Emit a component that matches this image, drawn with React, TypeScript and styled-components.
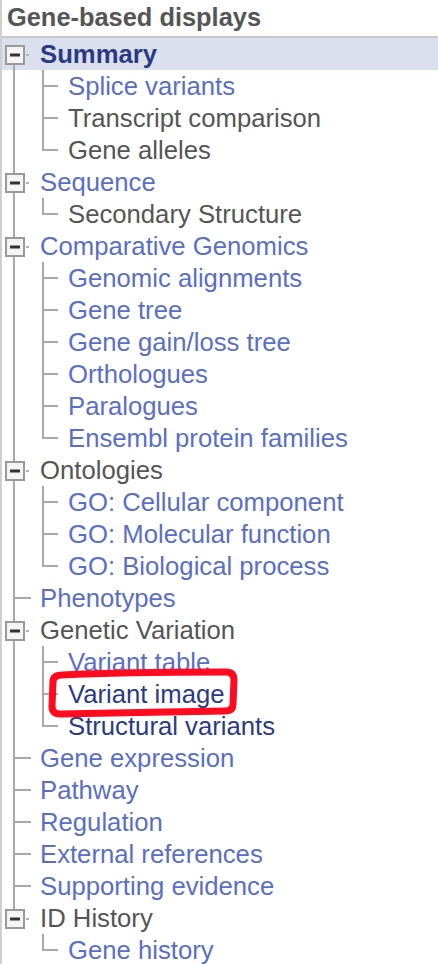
import React from "react";
import styled, { createGlobalStyle } from "styled-components";

const Global = createGlobalStyle`
  html, body { margin: 0; padding: 0; background: #fff; }
  body { font-family: "Liberation Sans", Arial, Helvetica, sans-serif; }
`;

type Tone = "link" | "text" | "current" | "active";

interface Node {
  label: string;
  tone: Tone;
  children?: { label: string; tone: Tone }[];
}

const tree: Node[] = [
  {
    label: "Summary",
    tone: "active",
    children: [
      { label: "Splice variants", tone: "link" },
      { label: "Transcript comparison", tone: "text" },
      { label: "Gene alleles", tone: "text" },
    ],
  },
  { label: "Sequence", tone: "link", children: [{ label: "Secondary Structure", tone: "text" }] },
  {
    label: "Comparative Genomics",
    tone: "link",
    children: [
      { label: "Genomic alignments", tone: "link" },
      { label: "Gene tree", tone: "link" },
      { label: "Gene gain/loss tree", tone: "link" },
      { label: "Orthologues", tone: "link" },
      { label: "Paralogues", tone: "link" },
      { label: "Ensembl protein families", tone: "link" },
    ],
  },
  {
    label: "Ontologies",
    tone: "text",
    children: [
      { label: "GO: Cellular component", tone: "link" },
      { label: "GO: Molecular function", tone: "link" },
      { label: "GO: Biological process", tone: "link" },
    ],
  },
  { label: "Phenotypes", tone: "link" },
  {
    label: "Genetic Variation",
    tone: "text",
    children: [
      { label: "Variant table", tone: "link" },
      { label: "Variant image", tone: "current" },
      { label: "Structural variants", tone: "current" },
    ],
  },
  { label: "Gene expression", tone: "link" },
  { label: "Pathway", tone: "link" },
  { label: "Regulation", tone: "link" },
  { label: "External references", tone: "link" },
  { label: "Supporting evidence", tone: "link" },
  { label: "ID History", tone: "text", children: [{ label: "Gene history", tone: "link" }] },
];

const colors: Record<Tone, string> = {
  link: "#5b6ec7",
  text: "#555555",
  current: "#2c3a86",
  active: "#2c3a86",
};

const LINE = "#a9a9a9";

const Panel = styled.div`
  position: relative;
  width: 438px;
  height: 964px;
  overflow: hidden;
  border-left: 2px solid #cfcfcf;
  box-sizing: border-box;
`;

const Header = styled.div`
  height: 36px;
  border-bottom: 2px solid #c8c8c8;
  padding-left: 5px;
  font-size: 25.4px;
  font-weight: bold;
  color: #555;
  line-height: 34px;
`;

const List = styled.ul`
  list-style: none;
  margin: 0;
  padding: 0;
  display: flex;
  flex-direction: column;
`;

const Row = styled.li<{ $active?: boolean }>`
  height: 32px;
  display: flex;
  align-items: center;
  background: ${(p) => (p.$active ? "#dbe0ef" : "transparent")};
  white-space: nowrap;
`;

const Gutter = styled.svg`
  flex: none;
  display: block;
`;

const Label = styled.span<{ $tone: Tone }>`
  color: ${(p) => colors[p.$tone]};
  font-weight: ${(p) => (p.$tone === "active" ? "bold" : "normal")};
  font-size: 25.7px;
  line-height: 32px;
`;

const Marker = styled.svg`
  position: absolute;
  left: -2px;
  top: 0;
  pointer-events: none;
`;

type Trunk = "full" | "top" | "bottom" | "none";

function TopGutter({ trunk, expander }: { trunk: Trunk; expander: boolean }) {
  return (
    <Gutter width="38" height="32" viewBox="0 0 38 32">
      {trunk === "full" && <rect x="11" y="0" width="2" height="32" fill={LINE} />}
      {trunk === "top" && <rect x="11" y="0" width="2" height="8" fill={LINE} />}
      {trunk === "bottom" && <rect x="11" y="26" width="2" height="6" fill={LINE} />}
      {trunk === "full" && expander && null}
      {expander ? (
        <>
          <rect x="4" y="8" width="18" height="18" fill="#f4f4f4" stroke="#9a9a9a" strokeWidth="2" />
          <rect x="8" y="15.5" width="10" height="3" fill="#333" />
          <rect x="24" y="16" width="3" height="2" fill="#b5b5b5" />
        </>
      ) : (
        <rect x="13" y="15" width="16" height="2" fill={LINE} />
      )}
    </Gutter>
  );
}

function ChildGutter({ trunk, lastChild }: { trunk: boolean; lastChild: boolean }) {
  return (
    <Gutter width="66" height="32" viewBox="0 0 66 32">
      {trunk && <rect x="11" y="0" width="2" height="32" fill={LINE} />}
      <rect x="40" y="0" width="2" height={lastChild ? 17 : 32} fill={LINE} />
      <rect x="42" y="15" width="14" height="2" fill={LINE} />
    </Gutter>
  );
}

export default function App() {
  const rows: React.ReactNode[] = [];
  tree.forEach((node, i) => {
    const first = i === 0;
    const last = i === tree.length - 1;
    const hasKids = !!node.children?.length;
    const trunk: Trunk = !hasKids ? "full" : first ? "bottom" : last ? "top" : "full";
    rows.push(
      <Row key={node.label} $active={node.tone === "active"}>
        <TopGutter trunk={trunk} expander={hasKids} />
        <Label $tone={node.tone}>{node.label}</Label>
      </Row>
    );
    node.children?.forEach((c, j) => {
      rows.push(
        <Row key={node.label + c.label}>
          <ChildGutter trunk={!last} lastChild={j === node.children!.length - 1} />
          <Label $tone={c.tone}>{c.label}</Label>
        </Row>
      );
    });
  });

  return (
    <>
      <Global />
      <Panel>
        <Header>Gene-based displays</Header>
        <List>{rows}</List>
        <Marker width="438" height="964" viewBox="0 0 438 964">
          <path
            d="M62 675 C 100 673, 180 672, 226 672 Q 234 672 234 680 L 233 704 Q 233 711 225 711 C 170 712, 100 713, 60 714 Q 52 714 52 706 L 53 682 Q 53 675 62 675 Z"
            fill="none"
            stroke="#ff0a1e"
            strokeWidth="7"
            strokeLinejoin="round"
          />
        </Marker>
      </Panel>
    </>
  );
}
